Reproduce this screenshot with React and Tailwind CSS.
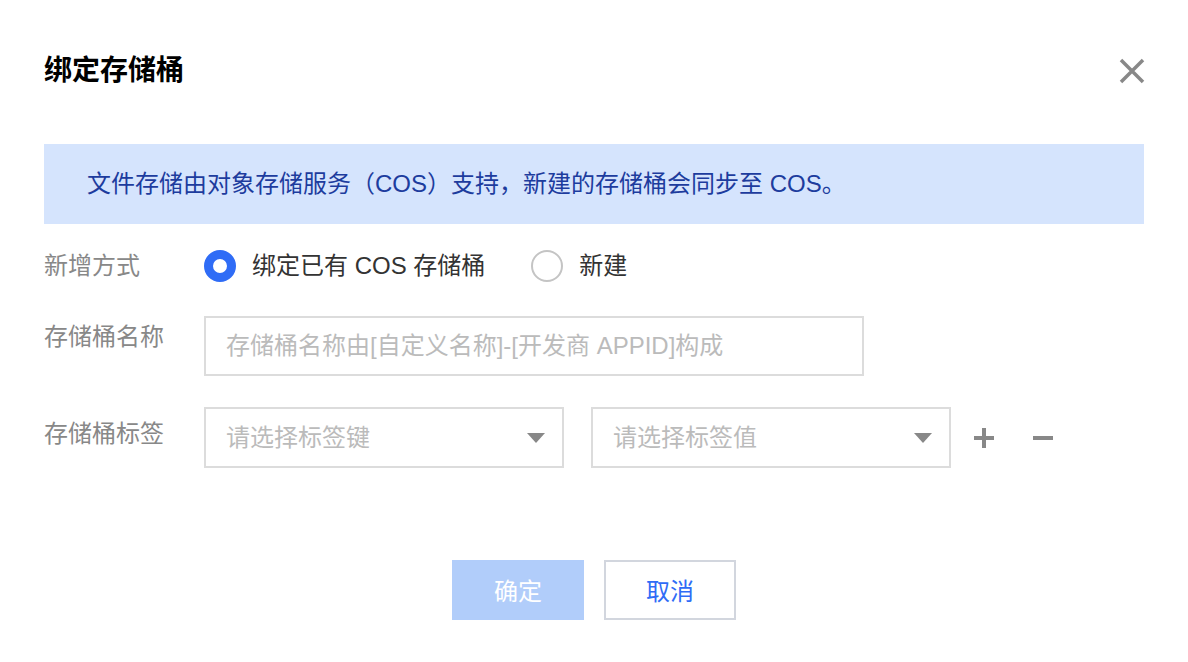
import { useState } from "react";

const font = {
  fontFamily: '"Liberation Sans", "Noto Sans CJK SC", sans-serif',
};

const Radio = ({ checked, label, onClick }) => (
  <button onClick={onClick} className="flex items-center gap-[16px]">
    {checked ? (
      <span className="w-[32px] h-[32px] rounded-full border-[9px] border-[#2f6cf6] bg-white" />
    ) : (
      <span className="w-[32px] h-[32px] rounded-full border-2 border-[#c4c4c4] bg-white" />
    )}
    <span className="text-[24px] text-[#333]">{label}</span>
  </button>
);

const Select = ({ placeholder }) => (
  <div className="w-[360px] h-[61px] border-2 border-[#dcdcdc] flex items-center justify-between pl-[20px] pr-[17px]">
    <span className="text-[24px] text-[#bbb]">{placeholder}</span>
    <svg width="18" height="10" viewBox="0 0 18 10">
      <polygon points="0,0 18,0 9,10" fill="#888" />
    </svg>
  </div>
);

const App = () => {
  const [mode, setMode] = useState("bind");

  return (
    <div className="w-[1188px] h-[662px] bg-white px-[44px]" style={font}>
      {/* Header */}
      <div className="flex items-center justify-between pt-[51px] h-[90px]">
        <h1 className="text-[28px] font-bold text-black leading-[38px]">绑定存储桶</h1>
        <svg width="26" height="26" viewBox="0 0 26 26" className="mr-[-1px]">
          <path d="M2 2 L24 24 M24 2 L2 24" stroke="#888" strokeWidth="3.5" />
        </svg>
      </div>

      {/* Notice */}
      <div className="mt-[54px] h-[80px] bg-[#d5e4fd] flex items-center pl-[43px]">
        <p className="text-[24px] text-[#1d3c9e]">
          文件存储由对象存储服务（COS）支持，新建的存储桶会同步至 COS。
        </p>
      </div>

      {/* Form */}
      <div className="mt-[12px] flex items-center h-[60px]">
        <div className="w-[160px] text-[24px] text-[#888]">新增方式</div>
        <div className="flex items-center gap-[46px]">
          <Radio
            checked={mode === "bind"}
            label="绑定已有 COS 存储桶"
            onClick={() => setMode("bind")}
          />
          <Radio
            checked={mode === "new"}
            label="新建"
            onClick={() => setMode("new")}
          />
        </div>
      </div>

      <div className="mt-[20px] flex items-start">
        <div className="w-[160px] pt-[5px] text-[24px] leading-[32px] text-[#888]">存储桶名称</div>
        <input
          type="text"
          placeholder="存储桶名称由[自定义名称]-[开发商 APPID]构成"
          className="w-[660px] h-[60px] border-2 border-[#dcdcdc] px-[20px] text-[24px] text-[#333] placeholder:text-[#bbb] outline-none"
        />
      </div>

      <div className="mt-[31px] flex items-start">
        <div className="w-[160px] pt-[11px] text-[24px] leading-[32px] text-[#888]">存储桶标签</div>
        <div className="flex items-center gap-[27px]">
          <Select placeholder="请选择标签键" />
          <Select placeholder="请选择标签值" />
          <div className="flex items-center gap-[39px] ml-[-4px]">
            <svg width="20" height="20" viewBox="0 0 20 20">
              <path d="M8 0 H12 V8 H20 V12 H12 V20 H8 V12 H0 V8 H8 Z" fill="#888" />
            </svg>
            <svg width="20" height="4" viewBox="0 0 20 4">
              <rect width="20" height="4" fill="#888" />
            </svg>
          </div>
        </div>
      </div>

      {/* Footer */}
      <div className="mt-[92px] flex justify-center gap-[20px]">
        <button className="w-[132px] h-[60px] bg-[#b1cdfa] text-white text-[24px] pt-[3px]">确定</button>
        <button className="w-[132px] h-[60px] border-2 border-[#d2d6de] bg-white text-[#2f6cf6] text-[24px] pt-[3px]">
          取消
        </button>
      </div>
    </div>
  );
};

export default App;
